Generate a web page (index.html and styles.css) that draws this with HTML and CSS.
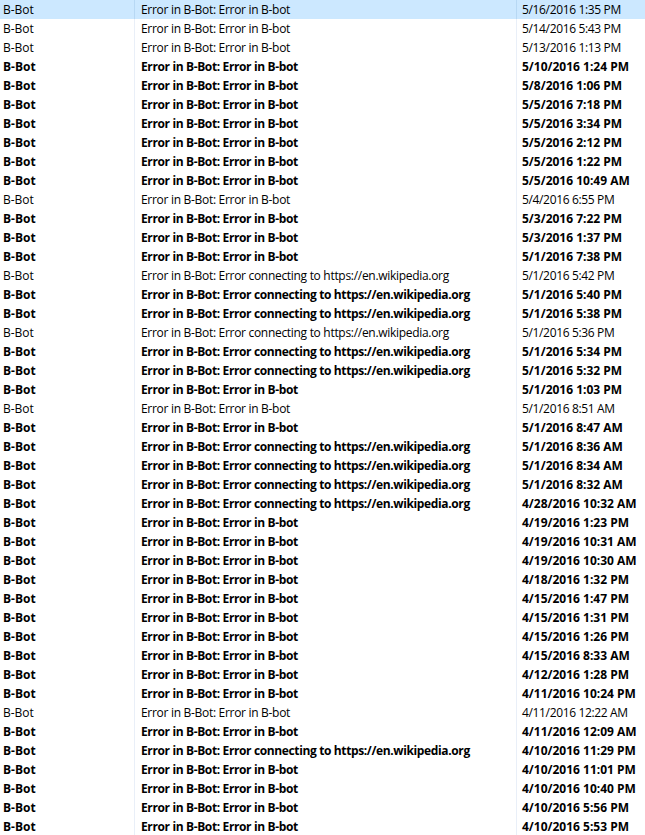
FILE: index.html
```html
<!DOCTYPE html>
<html>
<head>
<meta charset="utf-8">
<link rel="stylesheet" href="styles.css">
</head>
<body>
<div class="list">
<div class="row sel"><span class="c from">B-Bot</span><span class="c subj">Error in B-Bot: Error in B-bot</span><span class="c date">5/16/2016 1:35 PM</span></div>
<div class="row"><span class="c from">B-Bot</span><span class="c subj">Error in B-Bot: Error in B-bot</span><span class="c date">5/14/2016 5:43 PM</span></div>
<div class="row"><span class="c from">B-Bot</span><span class="c subj">Error in B-Bot: Error in B-bot</span><span class="c date">5/13/2016 1:13 PM</span></div>
<div class="row unread"><span class="c from">B-Bot</span><span class="c subj">Error in B-Bot: Error in B-bot</span><span class="c date">5/10/2016 1:24 PM</span></div>
<div class="row unread"><span class="c from">B-Bot</span><span class="c subj">Error in B-Bot: Error in B-bot</span><span class="c date">5/8/2016 1:06 PM</span></div>
<div class="row unread"><span class="c from">B-Bot</span><span class="c subj">Error in B-Bot: Error in B-bot</span><span class="c date">5/5/2016 7:18 PM</span></div>
<div class="row unread"><span class="c from">B-Bot</span><span class="c subj">Error in B-Bot: Error in B-bot</span><span class="c date">5/5/2016 3:34 PM</span></div>
<div class="row unread"><span class="c from">B-Bot</span><span class="c subj">Error in B-Bot: Error in B-bot</span><span class="c date">5/5/2016 2:12 PM</span></div>
<div class="row unread"><span class="c from">B-Bot</span><span class="c subj">Error in B-Bot: Error in B-bot</span><span class="c date">5/5/2016 1:22 PM</span></div>
<div class="row unread"><span class="c from">B-Bot</span><span class="c subj">Error in B-Bot: Error in B-bot</span><span class="c date">5/5/2016 10:49 AM</span></div>
<div class="row"><span class="c from">B-Bot</span><span class="c subj">Error in B-Bot: Error in B-bot</span><span class="c date">5/4/2016 6:55 PM</span></div>
<div class="row unread"><span class="c from">B-Bot</span><span class="c subj">Error in B-Bot: Error in B-bot</span><span class="c date">5/3/2016 7:22 PM</span></div>
<div class="row unread"><span class="c from">B-Bot</span><span class="c subj">Error in B-Bot: Error in B-bot</span><span class="c date">5/3/2016 1:37 PM</span></div>
<div class="row unread"><span class="c from">B-Bot</span><span class="c subj">Error in B-Bot: Error in B-bot</span><span class="c date">5/1/2016 7:38 PM</span></div>
<div class="row"><span class="c from">B-Bot</span><span class="c subj">Error in B-Bot: Error connecting to https://en.wikipedia.org</span><span class="c date">5/1/2016 5:42 PM</span></div>
<div class="row unread"><span class="c from">B-Bot</span><span class="c subj">Error in B-Bot: Error connecting to https://en.wikipedia.org</span><span class="c date">5/1/2016 5:40 PM</span></div>
<div class="row unread"><span class="c from">B-Bot</span><span class="c subj">Error in B-Bot: Error connecting to https://en.wikipedia.org</span><span class="c date">5/1/2016 5:38 PM</span></div>
<div class="row"><span class="c from">B-Bot</span><span class="c subj">Error in B-Bot: Error connecting to https://en.wikipedia.org</span><span class="c date">5/1/2016 5:36 PM</span></div>
<div class="row unread"><span class="c from">B-Bot</span><span class="c subj">Error in B-Bot: Error connecting to https://en.wikipedia.org</span><span class="c date">5/1/2016 5:34 PM</span></div>
<div class="row unread"><span class="c from">B-Bot</span><span class="c subj">Error in B-Bot: Error connecting to https://en.wikipedia.org</span><span class="c date">5/1/2016 5:32 PM</span></div>
<div class="row unread"><span class="c from">B-Bot</span><span class="c subj">Error in B-Bot: Error in B-bot</span><span class="c date">5/1/2016 1:03 PM</span></div>
<div class="row"><span class="c from">B-Bot</span><span class="c subj">Error in B-Bot: Error in B-bot</span><span class="c date">5/1/2016 8:51 AM</span></div>
<div class="row unread"><span class="c from">B-Bot</span><span class="c subj">Error in B-Bot: Error in B-bot</span><span class="c date">5/1/2016 8:47 AM</span></div>
<div class="row unread"><span class="c from">B-Bot</span><span class="c subj">Error in B-Bot: Error connecting to https://en.wikipedia.org</span><span class="c date">5/1/2016 8:36 AM</span></div>
<div class="row unread"><span class="c from">B-Bot</span><span class="c subj">Error in B-Bot: Error connecting to https://en.wikipedia.org</span><span class="c date">5/1/2016 8:34 AM</span></div>
<div class="row unread"><span class="c from">B-Bot</span><span class="c subj">Error in B-Bot: Error connecting to https://en.wikipedia.org</span><span class="c date">5/1/2016 8:32 AM</span></div>
<div class="row unread"><span class="c from">B-Bot</span><span class="c subj">Error in B-Bot: Error connecting to https://en.wikipedia.org</span><span class="c date">4/28/2016 10:32 AM</span></div>
<div class="row unread"><span class="c from">B-Bot</span><span class="c subj">Error in B-Bot: Error in B-bot</span><span class="c date">4/19/2016 1:23 PM</span></div>
<div class="row unread"><span class="c from">B-Bot</span><span class="c subj">Error in B-Bot: Error in B-bot</span><span class="c date">4/19/2016 10:31 AM</span></div>
<div class="row unread"><span class="c from">B-Bot</span><span class="c subj">Error in B-Bot: Error in B-bot</span><span class="c date">4/19/2016 10:30 AM</span></div>
<div class="row unread"><span class="c from">B-Bot</span><span class="c subj">Error in B-Bot: Error in B-bot</span><span class="c date">4/18/2016 1:32 PM</span></div>
<div class="row unread"><span class="c from">B-Bot</span><span class="c subj">Error in B-Bot: Error in B-bot</span><span class="c date">4/15/2016 1:47 PM</span></div>
<div class="row unread"><span class="c from">B-Bot</span><span class="c subj">Error in B-Bot: Error in B-bot</span><span class="c date">4/15/2016 1:31 PM</span></div>
<div class="row unread"><span class="c from">B-Bot</span><span class="c subj">Error in B-Bot: Error in B-bot</span><span class="c date">4/15/2016 1:26 PM</span></div>
<div class="row unread"><span class="c from">B-Bot</span><span class="c subj">Error in B-Bot: Error in B-bot</span><span class="c date">4/15/2016 8:33 AM</span></div>
<div class="row unread"><span class="c from">B-Bot</span><span class="c subj">Error in B-Bot: Error in B-bot</span><span class="c date">4/12/2016 1:28 PM</span></div>
<div class="row unread"><span class="c from">B-Bot</span><span class="c subj">Error in B-Bot: Error in B-bot</span><span class="c date">4/11/2016 10:24 PM</span></div>
<div class="row"><span class="c from">B-Bot</span><span class="c subj">Error in B-Bot: Error in B-bot</span><span class="c date">4/11/2016 12:22 AM</span></div>
<div class="row unread"><span class="c from">B-Bot</span><span class="c subj">Error in B-Bot: Error in B-bot</span><span class="c date">4/11/2016 12:09 AM</span></div>
<div class="row unread"><span class="c from">B-Bot</span><span class="c subj">Error in B-Bot: Error connecting to https://en.wikipedia.org</span><span class="c date">4/10/2016 11:29 PM</span></div>
<div class="row unread"><span class="c from">B-Bot</span><span class="c subj">Error in B-Bot: Error in B-bot</span><span class="c date">4/10/2016 11:01 PM</span></div>
<div class="row unread"><span class="c from">B-Bot</span><span class="c subj">Error in B-Bot: Error in B-bot</span><span class="c date">4/10/2016 10:40 PM</span></div>
<div class="row unread"><span class="c from">B-Bot</span><span class="c subj">Error in B-Bot: Error in B-bot</span><span class="c date">4/10/2016 5:56 PM</span></div>
<div class="row unread"><span class="c from">B-Bot</span><span class="c subj">Error in B-Bot: Error in B-bot</span><span class="c date">4/10/2016 5:53 PM</span></div>
</div>
</body>
</html>
```
FILE: styles.css
```css
html, body {
  margin: 0;
  padding: 0;
  background: #ffffff;
}
body {
  font-family: "Open Sans", "Noto Sans", sans-serif;
  font-size: 12px;
  color: #000;
  overflow: hidden;
}
.list {
  display: flex;
  flex-direction: column;
}
.row {
  display: grid;
  grid-template-columns: 134px 382px 1fr;
  height: 19px;
  line-height: 19px;
  white-space: nowrap;
}
.row.sel {
  background: #cce8ff;
}
.c {
  overflow: hidden;
}
.from {
  padding-left: 3px;
}
.subj {
  border-left: 1px solid #e9eff8;
  padding-left: 6px;
  letter-spacing: -0.3px;
}
.date {
  border-left: 1px solid #e9eff8;
  padding-left: 5px;
  letter-spacing: -0.35px;
}
.row.sel .subj,
.row.sel .date {
  border-left-color: #b7d8f4;
}
.unread {
  font-weight: 700;
}
.unread .subj {
  letter-spacing: -0.37px;
}
.unread .date {
  letter-spacing: 0;
}
```
